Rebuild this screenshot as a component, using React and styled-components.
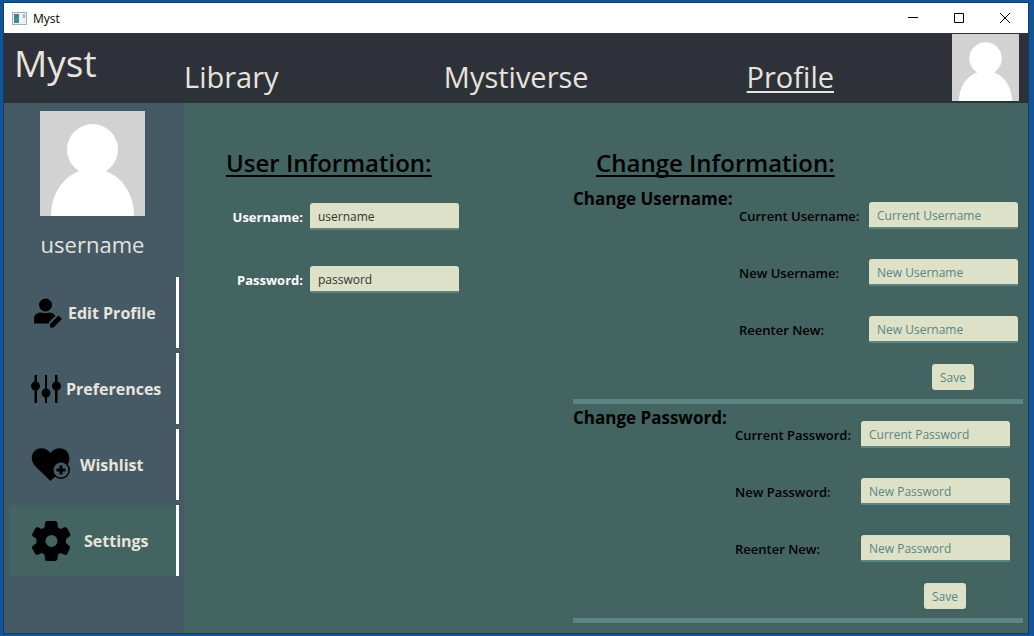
import React from 'react';
import styled, { createGlobalStyle } from 'styled-components';

const hand = '"Comic Sans MS", "Open Sans", sans-serif';
const ui = '"Segoe UI", "Open Sans", sans-serif';

const Global = createGlobalStyle`
  *, *::before, *::after { box-sizing: border-box; }
  body { margin: 0; background: #10559b; font-family: ${ui}; }
  button, input { font: inherit; margin: 0; }
`;

const Desktop = styled.div`
  min-height: 100vh;
  display: flex;
  padding: 3px 6px 3px 4px;
`;
const Window = styled.div`
  flex: 1;
  display: flex;
  flex-direction: column;
  background: #446461;
  box-shadow: 0 0 0 1px #153e63;
`;
const TitleBar = styled.div`
  height: 30px;
  display: flex;
  align-items: center;
  gap: 6px;
  padding-left: 8px;
  background: #fff;
  color: #000;
  font-size: 12px;
`;
const WindowButtons = styled.div`
  margin-left: auto;
  display: flex;
`;
const WindowButton = styled.button`
  width: 46px;
  height: 30px;
  display: grid;
  place-items: center;
  padding: 0;
  border: 0;
  background: none;
`;
const Header = styled.header`
  height: 70px;
  display: flex;
  align-items: flex-start;
  padding: 1px 9px 0 0;
  background: linear-gradient(#2f313a 60%, #2b3236);
  color: #e6e4dc;
  font-family: ${hand};
`;
const Logo = styled.h1`
  width: 180px;
  margin: 0;
  padding: 4px 0 0 10px;
  font-size: 37px;
  line-height: 50px;
  font-weight: 400;
`;
const Nav = styled.nav`
  flex: 1;
  display: grid;
  grid-template-columns: 260fr 303fr auto;
  margin-right: 118px;
  padding-top: 23px;
`;
const NavLink = styled.a`
  justify-self: start;
  color: inherit;
  font-size: 29px;
  line-height: 40px;
  text-decoration: ${(p) => (p.$active ? 'underline' : 'none')};
  text-decoration-thickness: 2px;
  text-underline-offset: 3px;
  text-decoration-skip-ink: none;
`;
const Main = styled.div`
  flex: 1;
  display: flex;
`;
const Sidebar = styled.aside`
  width: 180px;
  display: flex;
  flex-direction: column;
  padding: 8px 5px;
  background: #465a65;
  color: #e2e4dc;
`;
const UserCard = styled.div`
  display: flex;
  flex-direction: column;
  align-items: center;
  gap: 12px;
  height: 166px;
  padding-right: 3px;
  font-size: 22px;
  line-height: 32px;
`;
const Menu = styled.nav`
  display: flex;
  flex-direction: column;
  gap: 5px;
`;
const MenuItem = styled.button`
  height: 71px;
  display: flex;
  align-items: center;
  gap: ${(p) => p.$gap}px;
  padding: 0 0 0 22px;
  border: 0;
  border-right: 3px solid #fff;
  background: ${(p) => (p.$active ? '#446461' : 'transparent')};
  color: #e6e4dc;
  font-family: ${hand};
  font-size: 16px;
  font-weight: 700;
  white-space: nowrap;
  svg { color: #000; flex: none; }
`;
const Content = styled.main`
  flex: 1;
  display: grid;
  grid-template-columns: minmax(0, 1fr) 450px;
  align-items: start;
  padding: 42px 5px 10px 0;
`;
const Heading = styled.h2`
  margin: 0;
  padding-left: ${(p) => p.$indent}px;
  height: 40px;
  font-family: ${hand};
  font-size: 24px;
  line-height: 36px;
  font-weight: 600;
  color: #000;
  text-decoration: underline;
  text-decoration-thickness: 2px;
  text-underline-offset: 3px;
  text-decoration-skip-ink: none;
`;
const Account = styled.div`
  display: grid;
  grid-template-columns: 119px 149px;
  align-items: center;
  column-gap: 7px;
  row-gap: 36px;
  padding-top: 18px;
`;
const AccountLabel = styled.label`
  text-align: right;
  color: #fff;
  font-size: 13px;
  font-weight: 700;
`;
const TextBox = styled.input`
  width: 100%;
  height: 27px;
  padding: 1px 8px 0;
  border: 0;
  border-bottom: 2px solid #5c8583;
  border-radius: 3px 3px 1px 1px;
  background: #dde1c7;
  color: #333;
  font-size: 12px;
  outline: none;
  &::placeholder { color: #5c8583; opacity: 1; }
`;
const Section = styled.form`
  height: 219px;
  display: grid;
  grid-template-columns: ${(p) => p.$title}px ${(p) => p.$label}px 149px;
  align-items: start;
  align-content: start;
  border-bottom: 5px solid #5c8583;
`;
const SectionTitle = styled.h3`
  height: 28px;
  margin: 0;
  font-family: ${hand};
  font-size: 17px;
  line-height: 28px;
  font-weight: 700;
  white-space: nowrap;
  color: #000;
`;
const Fields = styled.div`
  grid-column: 2 / 4;
  display: grid;
  grid-template-columns: subgrid;
  align-items: center;
  row-gap: 30px;
  padding-top: 17px;
`;
const FieldLabel = styled.label`
  font-family: ${hand};
  font-size: 13px;
  font-weight: 600;
  white-space: nowrap;
  color: #000;
`;
const Save = styled.button`
  grid-column: 3;
  justify-self: end;
  height: 26px;
  margin: 21px 44px 0 0;
  padding: 0 8px;
  border: 0;
  border-radius: 3px;
  background: #dde1c7;
  color: #5c8583;
  font-size: 12px;
`;

const Avatar = ({ size }) => (
  <svg width={size} height={size} viewBox="0 0 105 105" role="img" aria-label="Avatar">
    <rect width="105" height="105" fill="#d2d2d2" />
    <circle cx="52.500" cy="38.500" r="25.500" fill="#fff" />
    <path d="M11 105C11 84 22 66 40 60H65C83 66 94 84 94 105Z" fill="#fff" />
  </svg>
);
const AppIcon = () => (
  <svg width="15" height="13" viewBox="0 0 15 13">
    <rect x=".5" y=".5" width="14" height="12" fill="#eef1f4" stroke="#a5abb2" />
    <rect x="2" y="2" width="5" height="9" fill="#3f8f7c" />
    <path d="M2 2h5v2L2 8z" fill="#3f7fa0" />
    <rect x="11" y="2" width="2" height="4" fill="#8fc3b8" />
  </svg>
);
const EditIcon = () => (
  <svg width="32" height="32" viewBox="0 0 32 32" fill="currentColor">
    <circle cx="14.500" cy="8" r="6.500" />
    <path d="M3 26.500V22C3 18 6 15.500 10 15.500Q14.500 17 19 15.500C21.500 16 23.500 17 24.500 19L18 25V26.500Z" />
    <path d="M19 27L27.500 18.500L31 22L22.500 30.500H19Z" />
  </svg>
);
const SlidersIcon = () => (
  <svg width="30" height="30" viewBox="0 0 30 30" fill="currentColor">
    <path d="M3.500 1h2.500v28H3.500zM14 1h2v28h-2zM24 1h2.500v28H24z" />
    <circle cx="4.500" cy="12" r="4.500" />
    <circle cx="15" cy="19" r="4.500" />
    <circle cx="25.500" cy="12" r="4.500" />
  </svg>
);
const HeartIcon = () => (
  <svg width="40" height="36" viewBox="0 0 40 36" fill="currentColor">
    <path d="M19.500 34L5 20C-1 14 0 7 4 3.500C9-.5 16 1 19.500 6C23 1 30-.5 35 3.500C39 7 39 13 37 17Z" />
    <circle cx="30" cy="23" r="9" />
    <circle cx="30" cy="23" r="7.500" fill="#465a65" />
    <path d="M28.500 18.500h3v3h3v3h-3v3h-3v-3h-3v-3h3z" />
  </svg>
);
const GearIcon = () => (
  <svg width="40" height="40" viewBox="0 0 40 40" fill="currentColor" fillRule="evenodd">
    <path d="M15 0h10l1.500 2L27 6.500L29.500 8L34 6L36 7L39.500 13.500L39 15L35 18V22L39 25.500V27L36 33.500L34 34L29.500 32L27 33.500L26.500 38L25 40H15L14 38L13.500 33.500L10.500 32L6.500 34L4.500 33.500L1 27L1.500 25L5.500 22V18L1.500 15L1 13.500L4.500 7L6.500 6L10.500 8L13.500 6.500L14 2ZM20.500 14a6 6 0 1 0 0 12a6 6 0 1 0 0-12Z" />
  </svg>
);

const menu = [
  ['Edit Profile', EditIcon, 5],
  ['Preferences', SlidersIcon, 5],
  ['Wishlist', HeartIcon, 9],
  ['Settings', GearIcon, 13],
];

const ChangeSection = ({ what, title, label }) => (
  <Section $title={title} $label={label} onSubmit={(e) => e.preventDefault()}>
    <SectionTitle>Change {what}:</SectionTitle>
    <Fields>
      <FieldLabel htmlFor={`current${what}`}>Current {what}:</FieldLabel>
      <TextBox id={`current${what}`} placeholder={`Current ${what}`} />
      <FieldLabel htmlFor={`new${what}`}>New {what}:</FieldLabel>
      <TextBox id={`new${what}`} placeholder={`New ${what}`} />
      <FieldLabel htmlFor={`repeat${what}`}>Reenter New:</FieldLabel>
      <TextBox id={`repeat${what}`} placeholder={`New ${what}`} />
    </Fields>
    <Save>Save</Save>
  </Section>
);

export default function App() {
  return (
    <Desktop>
      <Global />
      <Window>
        <TitleBar>
          <AppIcon />
          <span>Myst</span>
          <WindowButtons>
            <WindowButton aria-label="Minimize">
              <svg width="10" height="10"><path d="M0 4.500h10" stroke="#000" /></svg>
            </WindowButton>
            <WindowButton aria-label="Maximize">
              <svg width="10" height="10"><path d="M.5.5h9v9h-9z" fill="none" stroke="#000" /></svg>
            </WindowButton>
            <WindowButton aria-label="Close">
              <svg width="10" height="10"><path d="M0 0L10 10M10 0L0 10" stroke="#000" /></svg>
            </WindowButton>
          </WindowButtons>
        </TitleBar>
        <Header>
          <Logo>Myst</Logo>
          <Nav>
            <NavLink href="#library">Library</NavLink>
            <NavLink href="#mystiverse">Mystiverse</NavLink>
            <NavLink href="#profile" $active>Profile</NavLink>
          </Nav>
          <Avatar size={67} />
        </Header>
        <Main>
          <Sidebar>
            <UserCard>
              <Avatar size={105} />
              <span>username</span>
            </UserCard>
            <Menu>
              {menu.map(([name, Icon, gap]) => (
                <MenuItem key={name} $gap={gap} $active={name === 'Settings'}>
                  <Icon />
                  {name}
                </MenuItem>
              ))}
            </Menu>
          </Sidebar>
          <Content>
            <section>
              <Heading $indent={42}>User Information:</Heading>
              <Account>
                <AccountLabel htmlFor="username">Username:</AccountLabel>
                <TextBox id="username" defaultValue="username" />
                <AccountLabel htmlFor="password">Password:</AccountLabel>
                <TextBox id="password" defaultValue="password" />
              </Account>
            </section>
            <section>
              <Heading $indent={23}>Change Information:</Heading>
              <ChangeSection what="Username" title={166} label={130} />
              <ChangeSection what="Password" title={162} label={126} />
            </section>
          </Content>
        </Main>
      </Window>
    </Desktop>
  );
}
